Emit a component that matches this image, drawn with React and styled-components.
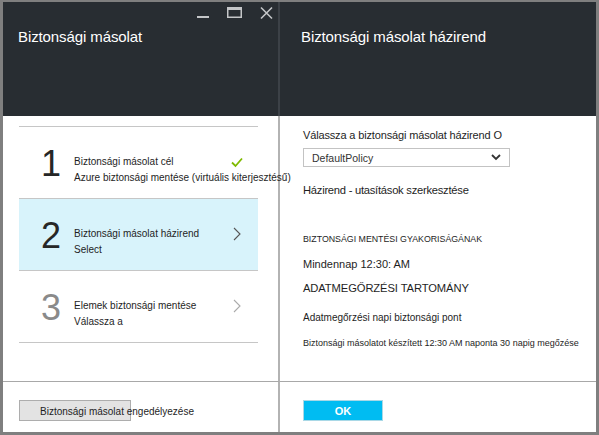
import React from "react";
import styled, { createGlobalStyle } from "styled-components";

const Global = createGlobalStyle`
  html, body { margin: 0; padding: 0; background: #ffffff; }
  body { font-family: "Liberation Sans", Arial, sans-serif; }
  * { box-sizing: border-box; }
`;

const Window = styled.div`
  width: 599px;
  height: 435px;
  display: flex;
  border-style: solid;
  border-color: #7f7f7f;
  border-width: 2px 3px 3px 3px;
  background: #fff;
  color: #1e1e1e;
`;

const Panel = styled.section`
  display: flex;
  flex-direction: column;
  width: ${(p) => p.$width};
  flex: ${(p) => (p.$width ? "none" : "1")};
`;

const Header = styled.header`
  height: 114px;
  background: #282d32;
  color: #ffffff;
  position: relative;
  padding: 26px 0 0 ${(p) => p.$pad}px;
  font-size: 15px;
  border-right: ${(p) => (p.$divider ? "2px solid #3c4147" : "none")};
`;

const Title = styled.h1`
  margin: 0;
  font-size: 15px;
  font-weight: normal;
  line-height: 18px;
  letter-spacing: -0.1px;
`;

const Controls = styled.div`
  position: absolute;
  top: 4px;
  right: 5px;
  display: flex;
  gap: 18px;
  align-items: flex-start;
`;

const Body = styled.div`
  flex: 1;
  border-right: ${(p) => (p.$divider ? "2px solid #b3b3b3" : "none")};
  border-bottom: 1px solid #a8a8a8;
  padding: ${(p) => p.$padding};
`;

const Footer = styled.footer`
  height: 50px;
  border-right: ${(p) => (p.$divider ? "2px solid #b3b3b3" : "none")};
  padding: 18px 0 0 ${(p) => p.$pad}px;
`;

const StepList = styled.div`
  width: 239px;
  border-top: 1px solid #c6c6c6;
`;

const Step = styled.div`
  height: 72px;
  border-bottom: 1px solid #c6c6c6;
  background: ${(p) => (p.$active ? "#d8f3fb" : "transparent")};
  display: grid;
  grid-template-columns: 55px minmax(0, 1fr) 31px;
  align-items: start;
  padding-top: 18px;
`;

const StepNumber = styled.div`
  font-size: 36px;
  line-height: 37px;
  padding-left: 22px;
  color: ${(p) => (p.$muted ? "#8a8a8a" : "#262626")};
`;

const StepText = styled.div`
  margin-top: 9px;
  font-size: 10px;
  line-height: 16px;
  white-space: nowrap;
  color: #1e1e1e;
  overflow: visible;
`;

const StepIcon = styled.div`
  margin-top: 9px;
  width: 20px;
  height: 16px;
  display: flex;
  align-items: center;
  justify-content: center;
`;

const GrayButton = styled.button`
  width: 112px;
  height: 21px;
  padding: 2px 0 0 20px;
  margin: 0;
  background: #e3e3e3;
  border: 1px solid #adadad;
  font-family: inherit;
  font-size: 10px;
  color: #1e1e1e;
  text-align: left;
  white-space: nowrap;
  overflow: visible;
  line-height: 17px;
`;

const PrimaryButton = styled.button`
  width: 80px;
  height: 21px;
  padding: 0;
  margin: 0;
  background: #00bcf2;
  border: 1px solid #a9d8e6;
  color: #ffffff;
  font-family: inherit;
  font-weight: bold;
  font-size: 11px;
`;

const Label = styled.div`
  font-size: ${(p) => p.$size}px;
  line-height: ${(p) => p.$lh || 14}px;
  margin-top: ${(p) => p.$mt || 0}px;
  letter-spacing: ${(p) => p.$ls || 0}px;
  color: #1e1e1e;
  white-space: nowrap;
`;

const Select = styled.div`
  width: 207px;
  height: 19px;
  margin-top: 6px;
  border: 1px solid #c3c3c3;
  display: flex;
  align-items: center;
  justify-content: space-between;
  padding: 0 8px 0 8px;
  font-size: 10.5px;
  color: #333;
`;

const MinIcon = () => (
  <svg width="12" height="16" viewBox="0 0 12 16">
    <rect x="0" y="10" width="12" height="2" fill="#c4c6c8" />
  </svg>
);
const MaxIcon = () => (
  <svg width="15" height="16" viewBox="0 0 15 16">
    <rect x="0.75" y="1.75" width="13.5" height="9.5" fill="none" stroke="#c4c6c8" strokeWidth="1.5" />
    <rect x="0" y="1" width="15" height="3" fill="#c4c6c8" />
  </svg>
);
const CloseIcon = () => (
  <svg width="13" height="16" viewBox="0 0 13 16">
    <path d="M1 1.5 L12 12.5 M12 1.5 L1 12.5" stroke="#c4c6c8" strokeWidth="1.6" />
  </svg>
);
const Check = () => (
  <svg width="12" height="11" viewBox="0 0 12 11">
    <path d="M1 5.5 L4.5 9 L11 1.5" fill="none" stroke="#7fba00" strokeWidth="1.8" />
  </svg>
);
const Chevron = ({ color }) => (
  <svg width="8" height="14" viewBox="0 0 8 14">
    <path d="M1 1 L7 7 L1 13" fill="none" stroke={color} strokeWidth="1.1" />
  </svg>
);
const Down = () => (
  <svg width="10" height="7" viewBox="0 0 10 7">
    <path d="M1 1 L5 5 L9 1" fill="none" stroke="#333" strokeWidth="1.8" />
  </svg>
);

const steps = [
  { n: "1", title: "Biztonsági másolat cél", sub: "Azure biztonsági mentése (virtuális kiterjesztésű)", icon: "check" },
  { n: "2", title: "Biztonsági másolat házirend", sub: "Select", icon: "chev", active: true },
  { n: "3", title: "Elemek biztonsági mentése", sub: "Válassza a", icon: "chevMuted", muted: true },
];

export default function App() {
  return (
    <>
      <Global />
      <Window>
        <Panel $width="277px">
          <Header $pad={15} $divider>
            <Title>Biztonsági másolat</Title>
            <Controls>
              <MinIcon />
              <MaxIcon />
              <CloseIcon />
            </Controls>
          </Header>
          <Body $divider $padding="10px 0 0 16px">
            <StepList>
              {steps.map((s) => (
                <Step key={s.n} $active={s.active}>
                  <StepNumber $muted={s.muted}>{s.n}</StepNumber>
                  <StepText>
                    <div>{s.title}</div>
                    <div>{s.sub}</div>
                  </StepText>
                  <StepIcon>
                    {s.icon === "check" && <Check />}
                    {s.icon === "chev" && <Chevron color="#555" />}
                    {s.icon === "chevMuted" && <Chevron color="#aaa" />}
                  </StepIcon>
                </Step>
              ))}
            </StepList>
          </Body>
          <Footer $divider $pad={16}>
            <GrayButton>Biztonsági másolat engedélyezése</GrayButton>
          </Footer>
        </Panel>
        <Panel>
          <Header $pad={21}>
            <Title>Biztonsági másolat házirend</Title>
          </Header>
          <Body $padding="12px 0 0 23px">
            <Label $size={11} $ls={-0.15}>Válassza a biztonsági másolat házirend O</Label>
            <Select>
              <span>DefaultPolicy</span>
              <Down />
            </Select>
            <Label $size={11.2} $mt={16} $ls={-0.25}>Házirend - utasítások szerkesztése</Label>
            <Label $size={8.8} $mt={35}>BIZTONSÁGI MENTÉSI GYAKORISÁGÁNAK</Label>
            <Label $size={11} $mt={11}>Mindennap 12:30: AM</Label>
            <Label $size={11.2} $mt={10} $ls={-0.1}>ADATMEGŐRZÉSI TARTOMÁNY</Label>
            <Label $size={10} $mt={16}>Adatmegőrzési napi biztonsági pont</Label>
            <Label $size={9} $mt={11}>Biztonsági másolatot készített 12:30 AM naponta 30 napig megőzése</Label>
          </Body>
          <Footer $pad={23}>
            <PrimaryButton>OK</PrimaryButton>
          </Footer>
        </Panel>
      </Window>
    </>
  );
}
